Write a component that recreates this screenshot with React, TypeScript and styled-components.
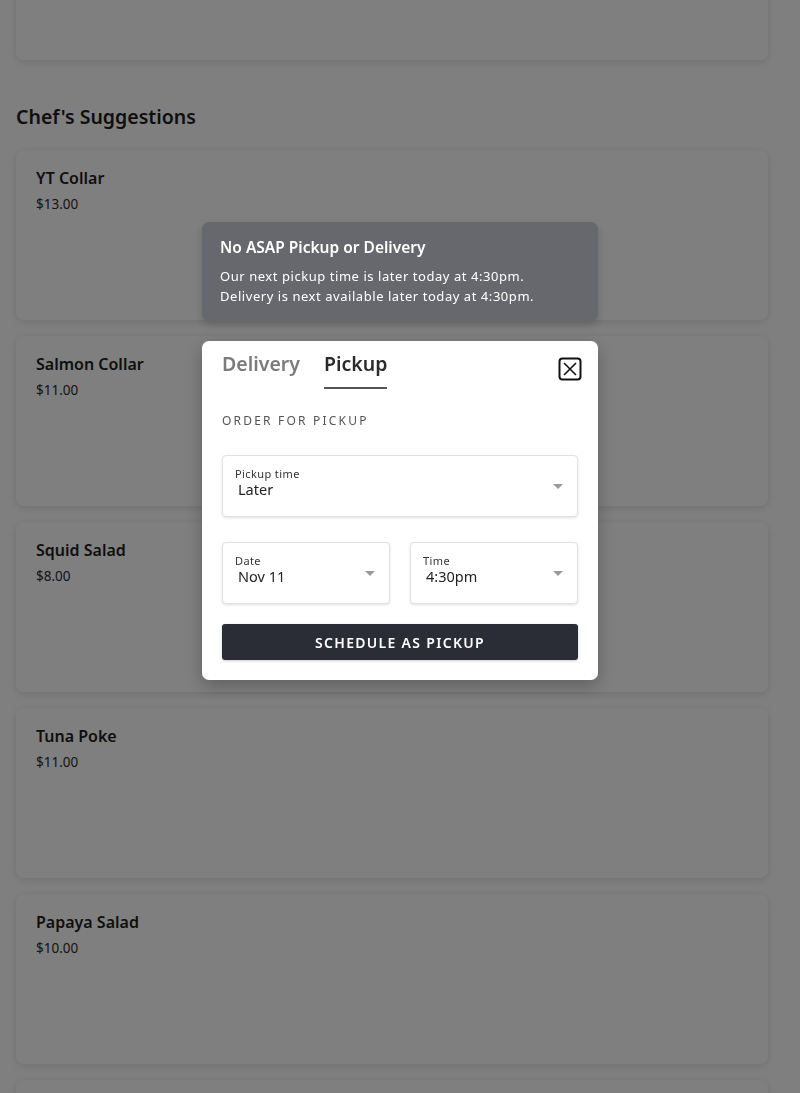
import React, { useState } from 'react';
import styled, { createGlobalStyle } from 'styled-components';

const menuItems = [
  { id: 0, name: 'YT Collar', price: '$13.00' },
  { id: 1, name: 'Salmon Collar', price: '$11.00' },
  { id: 2, name: 'Squid Salad', price: '$8.00' },
  { id: 3, name: 'Tuna Poke', price: '$11.00' },
  { id: 4, name: 'Papaya Salad', price: '$10.00' },
  { id: 5, name: '', price: '' },
];

function Caret() {
  return (
    <svg width="10" height="5" viewBox="0 0 10 5">
      <path d="M0 0 L10 0 L5 5 Z" fill="#9a9a9a" />
    </svg>
  );
}

function CloseIcon() {
  return (
    <svg width="24" height="24" viewBox="0 0 24 24" fill="none">
      <rect x="1.5" y="1.5" width="21" height="21" rx="3" stroke="#111" strokeWidth="2" />
      <path d="M6 6 L18 18 M18 6 L6 18" stroke="#111" strokeWidth="1.6" />
    </svg>
  );
}

function App() {
  const [mode, setMode] = useState<'delivery' | 'pickup'>('pickup');

  return (
    <>
      <GlobalStyle />
      <Page>
        <TopCard />
        <SectionTitle>Chef's Suggestions</SectionTitle>
        <CardList>
          {menuItems.map((item) => (
            <MenuCard key={item.id}>
              <ItemName>{item.name}</ItemName>
              <ItemPrice>{item.price}</ItemPrice>
            </MenuCard>
          ))}
        </CardList>
      </Page>

      <Overlay>
        <Toast>
          <ToastTitle>No ASAP Pickup or Delivery</ToastTitle>
          <ToastText>
            Our next pickup time is later today at 4:30pm.
            <br />
            Delivery is next available later today at 4:30pm.
          </ToastText>
        </Toast>

        <Modal>
          <ModalHeader>
            <Tabs>
              <Tab active={mode === 'delivery'} onClick={() => setMode('delivery')}>
                Delivery
              </Tab>
              <Tab active={mode === 'pickup'} onClick={() => setMode('pickup')}>
                Pickup
              </Tab>
            </Tabs>
            <CloseButton aria-label="Close">
              <CloseIcon />
            </CloseButton>
          </ModalHeader>

          <Eyebrow>Order for pickup</Eyebrow>

          <Select>
            <SelectText>
              <SelectLabel>Pickup time</SelectLabel>
              <SelectValue>Later</SelectValue>
            </SelectText>
            <Caret />
          </Select>

          <SelectRow>
            <Select>
              <SelectText>
                <SelectLabel>Date</SelectLabel>
                <SelectValue>Nov 11</SelectValue>
              </SelectText>
              <Caret />
            </Select>
            <Select>
              <SelectText>
                <SelectLabel>Time</SelectLabel>
                <SelectValue>4:30pm</SelectValue>
              </SelectText>
              <Caret />
            </Select>
          </SelectRow>

          <PrimaryButton>Schedule as pickup</PrimaryButton>
        </Modal>
      </Overlay>
    </>
  );
}

export default App;

const GlobalStyle = createGlobalStyle`
*,
*::before,
*::after {
  margin: 0;
  padding: 0;
  box-sizing: border-box;
}
html, body {
  height: 100%;
  overflow: hidden;
}
body {
  background: #ffffff;
  font-family: "Noto Sans", Roboto, Arial, sans-serif;
  color: #222;
}
`;

const Page = styled.main`
  padding: 0 32px 0 16px;
`;

const TopCard = styled.div`
  height: 170px;
  margin-top: -110px;
  background: #fff;
  border-radius: 8px;
  box-shadow: 0 2px 8px rgba(0, 0, 0, 0.12);
`;

const SectionTitle = styled.h2`
  font-size: 19.5px;
  line-height: 24px;
  font-weight: 600;
  color: #1e1e1e;
  margin: 45px 0 21px;
`;

const CardList = styled.div`
  display: flex;
  flex-direction: column;
  gap: 16px;
`;

const MenuCard = styled.div`
  height: 170px;
  padding: 18px 20px;
  background: #fff;
  border-radius: 8px;
  box-shadow: 0 2px 8px rgba(0, 0, 0, 0.12);
`;

const ItemName = styled.div`
  font-size: 16px;
  line-height: 20px;
  font-weight: 600;
  color: #1e1e1e;
  min-height: 20px;
`;

const ItemPrice = styled.div`
  margin-top: 7px;
  font-size: 13.5px;
  line-height: 18px;
  color: #2a2a2a;
`;

const Overlay = styled.div`
  position: fixed;
  inset: 0;
  background: rgba(0, 0, 0, 0.5);
  display: flex;
  flex-direction: column;
  align-items: center;
  padding-top: 222px;
  gap: 20px;
`;

const Toast = styled.div`
  width: 396px;
  height: 99px;
  padding: 14px 18px 0;
  background: #67686d;
  border-radius: 7px;
  box-shadow: 0 4px 10px rgba(0, 0, 0, 0.18);
  color: #fff;
`;

const ToastTitle = styled.div`
  font-size: 15.5px;
  line-height: 22px;
  font-weight: 600;
`;

const ToastText = styled.p`
  margin-top: 8px;
  font-size: 13px;
  line-height: 20px;
  letter-spacing: 0.55px;
`;

const Modal = styled.div`
  width: 396px;
  padding: 8px 20px 20px;
  background: #fff;
  border-radius: 7px;
  box-shadow: 0 6px 18px rgba(0, 0, 0, 0.25);
`;

const ModalHeader = styled.div`
  display: flex;
  justify-content: space-between;
  align-items: flex-start;
`;

const Tabs = styled.div`
  display: flex;
  gap: 24px;
`;

const Tab = styled.button<{ active: boolean }>`
  border: none;
  background: none;
  cursor: pointer;
  font-family: inherit;
  font-size: 19.5px;
  line-height: 30px;
  font-weight: 600;
  padding-bottom: 8px;
  color: ${(p) => (p.active ? '#2b2b2b' : '#7b7b7b')};
  border-bottom: 2px solid ${(p) => (p.active ? '#555' : 'transparent')};
`;

const CloseButton = styled.button`
  border: none;
  background: none;
  cursor: pointer;
  display: flex;
  margin-top: 8px;
  margin-right: -4px;
`;

const Eyebrow = styled.div`
  margin-top: 24px;
  font-size: 12px;
  line-height: 16px;
  letter-spacing: 2.2px;
  text-transform: uppercase;
  color: #555;
`;

const SelectRow = styled.div`
  display: grid;
  grid-template-columns: 1fr 1fr;
  gap: 20px;
  margin-top: 25px;
`;

const Select = styled.div`
  height: 62px;
  display: flex;
  align-items: center;
  justify-content: space-between;
  padding: 0 14px 0 12px;
  border: 1px solid #e2e2e2;
  border-radius: 4px;
  box-shadow: 0 1px 3px rgba(0, 0, 0, 0.12);
  background: #fff;
  ${Eyebrow} + & {
    margin-top: 26px;
  }
`;

const SelectText = styled.div`
  display: flex;
  flex-direction: column;
  margin-top: -8px;
`;

const SelectLabel = styled.span`
  font-size: 11px;
  line-height: 13px;
  letter-spacing: 0.4px;
  color: #333;
`;

const SelectValue = styled.span`
  font-size: 14.5px;
  line-height: 18px;
  padding-left: 3px;
  color: #222;
`;

const PrimaryButton = styled.button`
  width: 100%;
  height: 36px;
  margin-top: 20px;
  border: none;
  border-radius: 3px;
  background: #2b2d36;
  color: #fff;
  font-family: inherit;
  font-size: 14px;
  font-weight: 600;
  letter-spacing: 1.3px;
  text-transform: uppercase;
  cursor: pointer;
  box-shadow: 0 1px 3px rgba(0, 0, 0, 0.2);
`;
